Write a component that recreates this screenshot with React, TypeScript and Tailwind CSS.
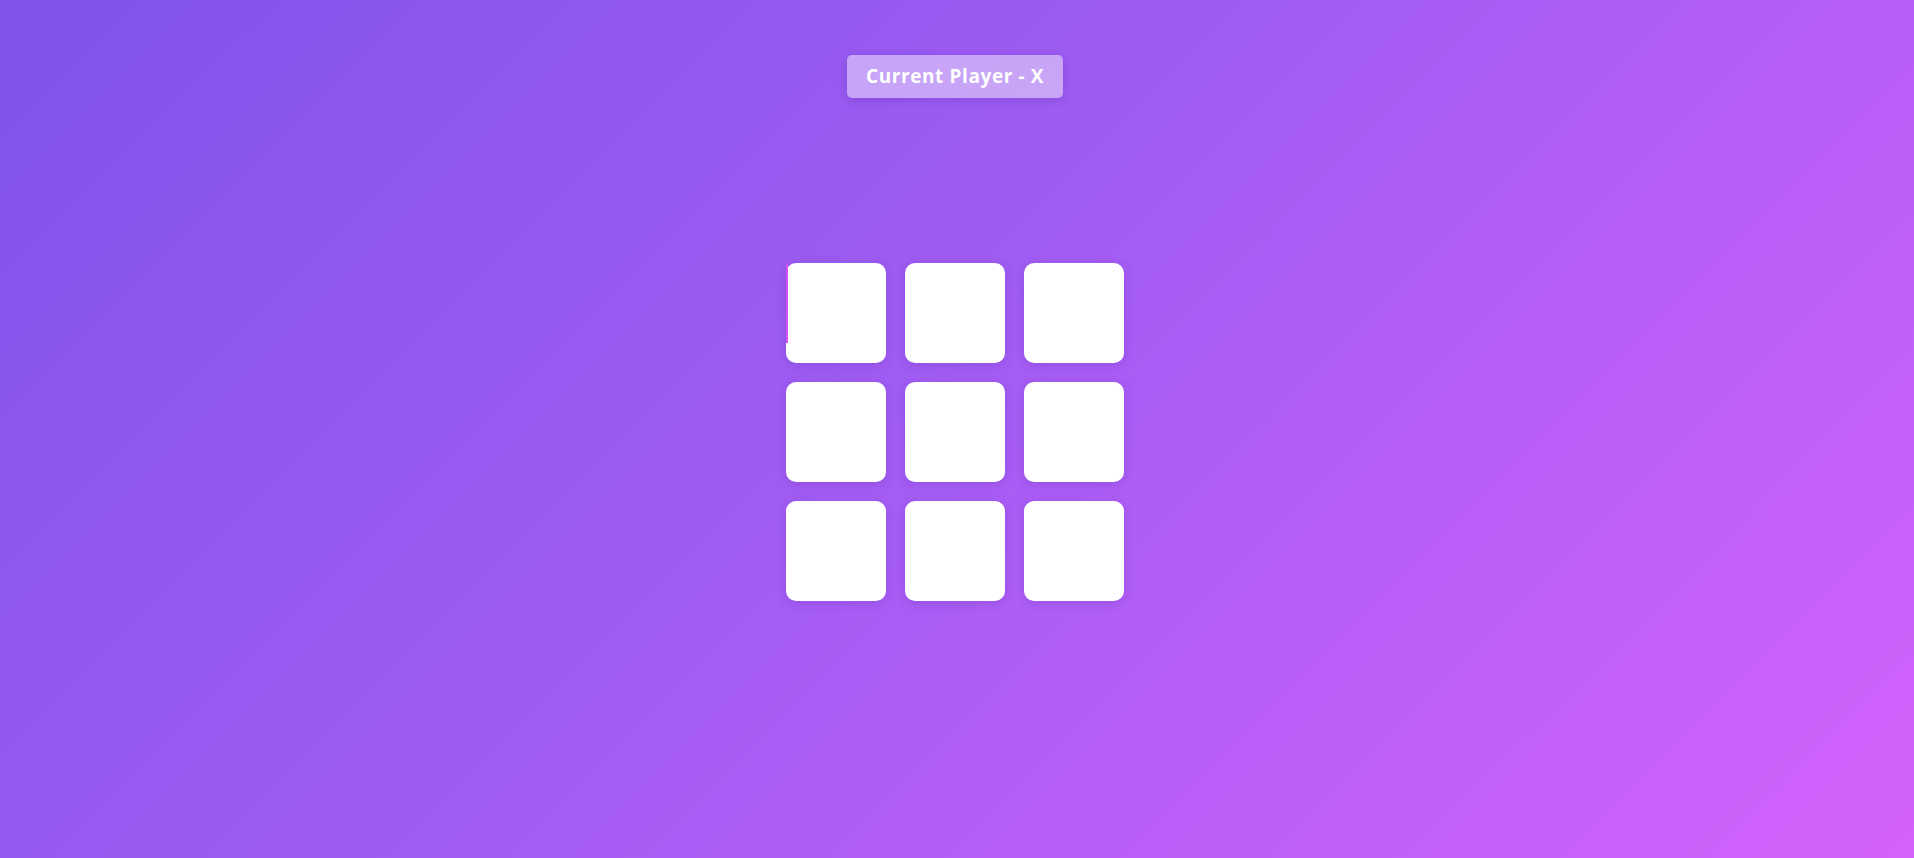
export default function App() {
  const cells = Array.from({ length: 9 }, (_, i) => i);

  return (
    <div className="min-h-screen w-full flex flex-col items-center pr-[4px] bg-[linear-gradient(135deg,#7f53ea_0%,#a05cf2_45%,#d462fc_100%)] font-['Open_Sans',sans-serif]">
      <div className="mt-[55px] h-[43px] w-[216px] flex items-center justify-center rounded-[5px] bg-white/45 shadow-[0_2px_8px_rgba(80,30,160,0.25)] text-white font-bold text-[19px] tracking-[0.6px]">
        Current Player - X
      </div>

      <div className="mt-[165px] grid grid-cols-3 gap-[19px]">
        {cells.map((i) => (
          <button
            key={i}
            className="relative w-[100px] h-[100px] rounded-[10px] bg-white shadow-[0_2px_10px_rgba(90,40,170,0.25)] outline-none"
          >
            {i === 0 && (
              <span className="absolute left-0 top-0 w-[2px] h-[80px] bg-[#d152f5]" />
            )}
          </button>
        ))}
      </div>
    </div>
  );
}
